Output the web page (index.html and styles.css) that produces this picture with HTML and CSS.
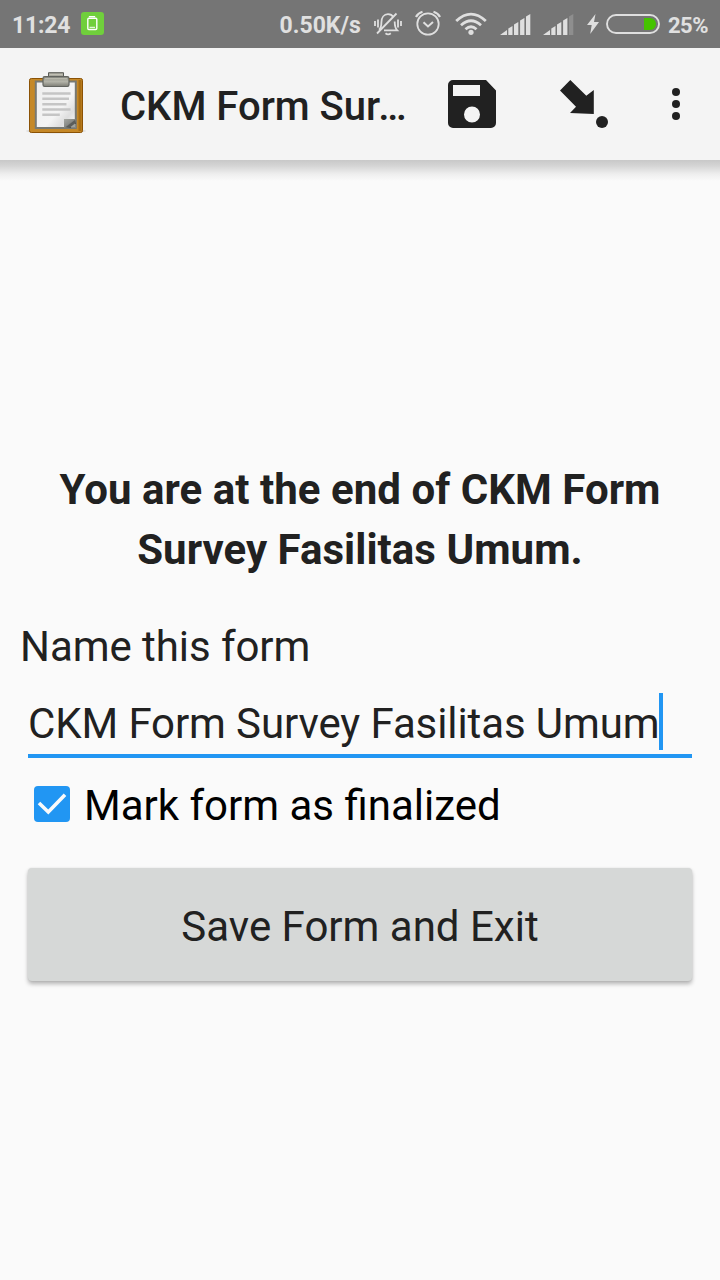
FILE: index.html
```html
<!DOCTYPE html>
<html lang="en">
<head>
<meta charset="utf-8">
<title>CKM Form Survey Fasilitas Umum</title>
<link rel="stylesheet" href="styles.css">
</head>
<body>
<div class="screen">
  <header class="status-bar">
    <span class="clock">11:24</span>
    <svg class="saver-icon" width="23" height="23" viewBox="0 0 23 23">
      <rect width="23" height="23" rx="3" fill="#70cf3c"/>
      <path d="M8.500 5.200V4.700h5v.5" fill="none" stroke="#fff" stroke-width="1.300"/>
      <rect x="6.800" y="6.300" width="9" height="11.200" rx="1" fill="none" stroke="#fff" stroke-width="1.400"/>
      <path d="M8.500 15.300h5.500" stroke="#fff" stroke-width="1"/>
    </svg>
    <span class="network-speed">0.50K/s</span>
    <svg class="mute-icon" width="28" height="24" viewBox="0 0 28 24" fill="none" stroke="#dfdfdf" stroke-width="1.800">
      <path d="M5 17.800C7.200 16 7.400 14 7.400 10.500C7.400 5.500 10 2.200 14 2.200c2.500 0 4.400 1.200 5.500 3M20.700 9.500c0 4.500.2 6.500 2.500 8.800H10M11.500 21.200c1.500 1.300 3.800 1.300 5.300 0M3 21.500L22.500 1.500"/>
      <path d="M1 9v5M4 7.500v8M24 7.500v8M27 9v5"/>
    </svg>
    <svg class="alarm-icon" width="26" height="26" viewBox="0 0 26 26" fill="none" stroke="#dfdfdf" stroke-width="1.800">
      <circle cx="13" cy="14" r="10.700"/>
      <path d="M8.500 12.200l4.500 4.300 5-4.500" stroke-width="2"/>
      <path d="M1 7Q3 3 7.500 1.700M25 7Q23 3 18.500 1.700" stroke-width="2.200"/>
    </svg>
    <svg class="wifi-icon" width="32" height="24" viewBox="0 0 32 24" fill="none" stroke="#dfdfdf" stroke-width="2.800">
      <path d="M1.200 9Q16-4.800 30.800 9"/>
      <path d="M6 13.200Q16 4.200 26 13.200"/>
      <path d="M10.500 17.200Q16 12.200 21.500 17.200"/>
      <circle cx="16" cy="20.300" r="2.600" fill="#dfdfdf" stroke="none"/>
    </svg>
    <svg class="signal-icon" width="31" height="21" viewBox="0 0 31 21" fill="#dfdfdf">
      <path d="M0 21l7-5v5zM8.300 14.500l4.200-2.500v9H8.300zM14 10.500l4.300-2.600V21H14zM20.100 6.500l4.300-2.600V21h-4.300zM26 2.500L30.300 0v21H26z"/>
    </svg>
    <svg class="signal-icon" width="31" height="21" viewBox="0 0 31 21" fill="#dfdfdf">
      <path d="M0 21l7-5v5zM8.300 14.500l4.200-2.500v9H8.300zM14 10.500l4.300-2.600V21H14zM20.100 6.500l4.300-2.600V21h-4.300z"/>
      <path d="M26 2.500L30.300 0v21H26z" fill="#8e8e8e"/>
    </svg>
    <svg class="bolt-icon" width="12" height="20" viewBox="0 0 12 20" fill="#dfdfdf">
      <path d="M8.500 0L0 11h4.700L3.200 20 12 8H7z"/>
    </svg>
    <svg class="battery-icon" width="54" height="20" viewBox="0 0 54 20">
      <rect x="1" y="1" width="52" height="18" rx="9" fill="none" stroke="#dfdfdf" stroke-width="1.900"/>
      <path d="M38 4h6a6 6 0 0 1 0 12h-6z" fill="#45c300"/>
    </svg>
    <span class="battery-level">25%</span>
  </header>

  <div class="app-bar">
    <svg class="app-icon" width="62" height="66" viewBox="0 0 62 66">
      <defs>
        <linearGradient id="clip" x2="0" y2="1"><stop stop-color="#92928a"/><stop offset=".5" stop-color="#b4b4a9"/><stop offset="1" stop-color="#7c7c74"/></linearGradient>
        <linearGradient id="sheet" x2="1" y2="1"><stop stop-color="#eee"/><stop offset=".6" stop-color="#f4f4f4"/><stop offset=".78" stop-color="#dedede"/><stop offset="1" stop-color="#fff"/></linearGradient>
        <linearGradient id="fold" x2="1" y2="1"><stop stop-color="#a5a7a2"/><stop offset=".45" stop-color="#898b87"/><stop offset=".75" stop-color="#50524f"/><stop offset=".76" stop-color="#858783"/></linearGradient>
      </defs>
      <ellipse cx="31" cy="61" rx="30" ry="2.500" fill="#dedede"/>
      <rect x="4.500" y="8.500" width="53" height="54" rx="1.800" fill="#c58827" stroke="#8b5205"/>
      <path d="M55 10v51" stroke="#a86d13" stroke-width="3"/>
      <rect x="10.800" y="11.500" width="40" height="46.500" fill="url(#sheet)" stroke="#777973" stroke-width="2"/>
      <path d="M17.300 23.500h28.300M17.300 28.700H44M17.300 34.200h24.200M17.300 39.500h28.300M17.300 44.800h17.500" stroke="#c5c5c5" stroke-width="2.400"/>
      <path d="M39 49h12v9H39z" fill="url(#fold)"/>
      <path d="M41 57l9-7v7z" fill="#5b5d5a"/><path d="M45.500 57l4.500-3.500V57z" fill="#a0a29d"/>
      <path d="M23.500 8V2.700h15V8z" fill="#aaa99f" stroke="#5a5c57"/>
      <rect x="18" y="6.700" width="26" height="9.800" rx="1.700" fill="url(#clip)" stroke="#62645f" stroke-width="1.200"/>
      <path d="M24.500 4.500h13M20 8.700h22" stroke="#c6c6ba" stroke-width=".8"/>
    </svg>
    <h1 class="title">CKM Form Sur<span class="ellipsis">…</span></h1>
    <svg class="save-icon" width="48" height="48" viewBox="0 0 48 48" fill="#212121">
      <path fill-rule="evenodd" d="M5 0H38L48 10.500V43a5 5 0 0 1-5 5H5a5 5 0 0 1-5-5V5a5 5 0 0 1 5-5zM5 5v11h27V5zM24 26.500a8 8 0 1 0 0 16 8 8 0 0 0 0-16z"/>
    </svg>
    <svg class="jump-icon" width="48" height="48" viewBox="0 0 48 48" fill="#212121">
      <path d="M10.300 0L26.300 15.700 33.800 9.900V34L10 33 16 26.700 0 10.500z"/>
      <circle cx="42" cy="42" r="6"/>
    </svg>
    <svg class="more-icon" width="8" height="32" viewBox="0 0 8 32" fill="#212121">
      <circle cx="4" cy="4" r="4"/><circle cx="4" cy="16" r="4"/><circle cx="4" cy="28" r="4"/>
    </svg>
  </div>

  <main class="content">
    <h2 class="end-message">You are at the end of CKM Form<br>Survey Fasilitas Umum.</h2>
    <p class="field-label">Name this form</p>
    <div class="text-field"><span class="field-value">CKM Form Survey Fasilitas Umum</span><span class="cursor"></span></div>
    <div class="finalize">
      <svg class="checkbox" width="36" height="36" viewBox="0 0 36 36">
        <rect width="36" height="36" rx="4" fill="#2196f3"/>
        <path d="M5 17L14.300 26 31 8.800" fill="none" stroke="#fafafa" stroke-width="3.600"/>
      </svg>
      <span class="finalize-label">Mark form as finalized</span>
    </div>
    <button class="save-button">Save Form and Exit</button>
  </main>
</div>
</body>
</html>
```

FILE: styles.css
```css
* { box-sizing: border-box; }

body {
  margin: 0;
  background: #fafafa;
  color: #212121;
  font-family: Roboto, sans-serif;
}

svg { display: block; flex: none; }

.screen { width: 720px; height: 1280px; overflow: hidden; }

.status-bar {
  display: flex;
  align-items: flex-start;
  height: 48px;
  padding: 0 12px;
  background: #757575;
  color: #e0e0e0;
  font-size: 23px;
  font-weight: 700;
  line-height: 51px;
  white-space: nowrap;
}

.clock { width: 69px; letter-spacing: -.2px; }
.saver-icon { margin-top: 12px; }
.network-speed { width: 94px; margin-left: 176px; }
.mute-icon { margin: 12px 0 0 1px; }
.alarm-icon { margin: 10px 0 0 13px; }
.wifi-icon { margin: 12px 0 0 14px; }
.signal-icon { margin: 14px 0 0 12px; }
.wifi-icon + .signal-icon { margin-left: 13px; }
.bolt-icon { margin: 14px 0 0 13px; }
.battery-icon { margin: 14px 0 0 7px; }
.battery-level { margin-left: 8px; font-size: 22px; letter-spacing: -.5px; }

.app-bar {
  display: flex;
  align-items: center;
  height: 112px;
  padding: 0 40px 0 25px;
  background: #f4f4f4;
}

.app-icon { margin-top: -2px; }

.title {
  width: 290px;
  margin: 6px 0 0 33px;
  font-size: 40px;
  font-weight: 500;
  line-height: 48px;
  white-space: nowrap;
}

.ellipsis { margin-left: -2px; letter-spacing: -1px; }

.save-icon { margin-left: 38px; }
.jump-icon { margin-left: 64px; }
.more-icon { margin-left: 64px; }

.content {
  height: 1120px;
  padding: 300px 20px 0;
  background: linear-gradient(#c8c8c8, #d5d5d5 6px, #eeeeee 14px, #fafafa 21px);
  font-size: 42px;
  line-height: 50px;
}

.end-message {
  margin: 0;
  font-size: 42px;
  font-weight: 700;
  letter-spacing: .04px;
  line-height: 60px;
  text-align: center;
}

.field-label { margin: 42px 0 0; letter-spacing: -.06px; }

.text-field {
  display: flex;
  height: 65px;
  margin: 21px 8px 0;
  border-bottom: 4px solid #2196f3;
  letter-spacing: -.1px;
  white-space: nowrap;
}

.field-value { padding-top: 6px; }

.cursor { width: 4px; height: 57px; background: #2196f3; }

.finalize {
  display: flex;
  align-items: center;
  margin: 23px 0 0 14px;
  color: #000;
}

.checkbox { margin-top: -4px; }
/* Keeps the "fi" ligature by leaving letter-spacing at its default. */
.finalize-label { margin-left: 14px; }

.save-button {
  display: block;
  width: 664px;
  height: 113px;
  margin: 37px 8px 0;
  padding: 4px 0 0;
  border: 0;
  border-radius: 4px;
  background: #d6d8d7;
  box-shadow: 0 3px 4px rgba(0, 0, 0, .28), 0 0 2px rgba(0, 0, 0, .1);
  color: #212121;
  font: inherit;
}
```
